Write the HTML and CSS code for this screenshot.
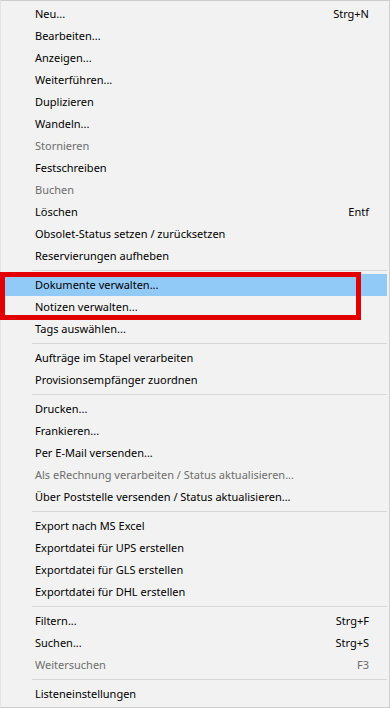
FILE: index.html
```html
<!DOCTYPE html>
<html lang="de">
  <head>
    <meta charset="UTF-8" />
    <meta name="viewport" content="width=device-width, initial-scale=1.0" />
    <title>Kontextmenü</title>
    <link rel="stylesheet" href="styles.css">
  </head>
  <body>
    <div class="menu">
      <ul class="menuList">
        <li class="item"><span class="label">Neu...</span><span class="key">Strg+N</span></li>
        <li class="item"><span class="label">Bearbeiten...</span></li>
        <li class="item"><span class="label">Anzeigen...</span></li>
        <li class="item"><span class="label">Weiterführen...</span></li>
        <li class="item"><span class="label">Duplizieren</span></li>
        <li class="item"><span class="label">Wandeln...</span></li>
        <li class="item disabled"><span class="label">Stornieren</span></li>
        <li class="item"><span class="label">Festschreiben</span></li>
        <li class="item disabled"><span class="label">Buchen</span></li>
        <li class="item"><span class="label">Löschen</span><span class="key">Entf</span></li>
        <li class="item"><span class="label">Obsolet-Status setzen / zurücksetzen</span></li>
        <li class="item"><span class="label">Reservierungen aufheben</span></li>
        <li class="separator"></li>
        <li class="item active"><span class="label">Dokumente verwalten...</span></li>
        <li class="item"><span class="label">Notizen verwalten...</span></li>
        <li class="item"><span class="label">Tags auswählen...</span></li>
        <li class="separator"></li>
        <li class="item"><span class="label">Aufträge im Stapel verarbeiten</span></li>
        <li class="item"><span class="label">Provisionsempfänger zuordnen</span></li>
        <li class="separator"></li>
        <li class="item"><span class="label">Drucken...</span></li>
        <li class="item"><span class="label">Frankieren...</span></li>
        <li class="item"><span class="label">Per E-Mail versenden...</span></li>
        <li class="item disabled"><span class="label">Als eRechnung verarbeiten / Status aktualisieren...</span></li>
        <li class="item"><span class="label">Über Poststelle versenden / Status aktualisieren...</span></li>
        <li class="separator"></li>
        <li class="item"><span class="label">Export nach MS Excel</span></li>
        <li class="item"><span class="label">Exportdatei für UPS erstellen</span></li>
        <li class="item"><span class="label">Exportdatei für GLS erstellen</span></li>
        <li class="item"><span class="label">Exportdatei für DHL erstellen</span></li>
        <li class="separator"></li>
        <li class="item"><span class="label">Filtern...</span><span class="key">Strg+F</span></li>
        <li class="item"><span class="label">Suchen...</span><span class="key">Strg+S</span></li>
        <li class="item disabled"><span class="label">Weitersuchen</span><span class="key">F3</span></li>
        <li class="separator"></li>
        <li class="item"><span class="label">Listeneinstellungen</span></li>
      </ul>
      <div class="markBox"></div>
    </div>
  </body>
</html>
```

FILE: styles.css
```css
body {
  margin: 0;
  background-color: #ffffff;
}
.menu {
  position: relative;
  width: 390px;
  height: 708px;
  box-sizing: border-box;
  background-color: #f2f2f2;
  border: 1px solid #cccccc;
  border-left-color: #e4e4e4;
  padding: 2px 2px 0 2px;
  font-family: "Noto Sans", sans-serif;
  font-size: 11px;
  color: #000000;
}
.menuList {
  list-style: none;
  margin: 0;
  padding: 0;
}
.item {
  display: flex;
  align-items: center;
  justify-content: space-between;
  box-sizing: border-box;
  height: 22px;
  padding: 0 18px 2px 32px;
  white-space: nowrap;
}
.item.active {
  background-color: #91c9f7;
}
.item.disabled {
  color: #6d6d6d;
}
.separator {
  height: 7px;
  display: flex;
  align-items: center;
  padding-left: 29px;
}
.separator::after {
  content: "";
  display: block;
  width: 100%;
  height: 1px;
  background-color: #d7d7d7;
}
.markBox {
  position: absolute;
  left: -1px;
  top: 271px;
  width: 361px;
  height: 48px;
  box-sizing: border-box;
  border: 5px solid #e30000;
}
```
